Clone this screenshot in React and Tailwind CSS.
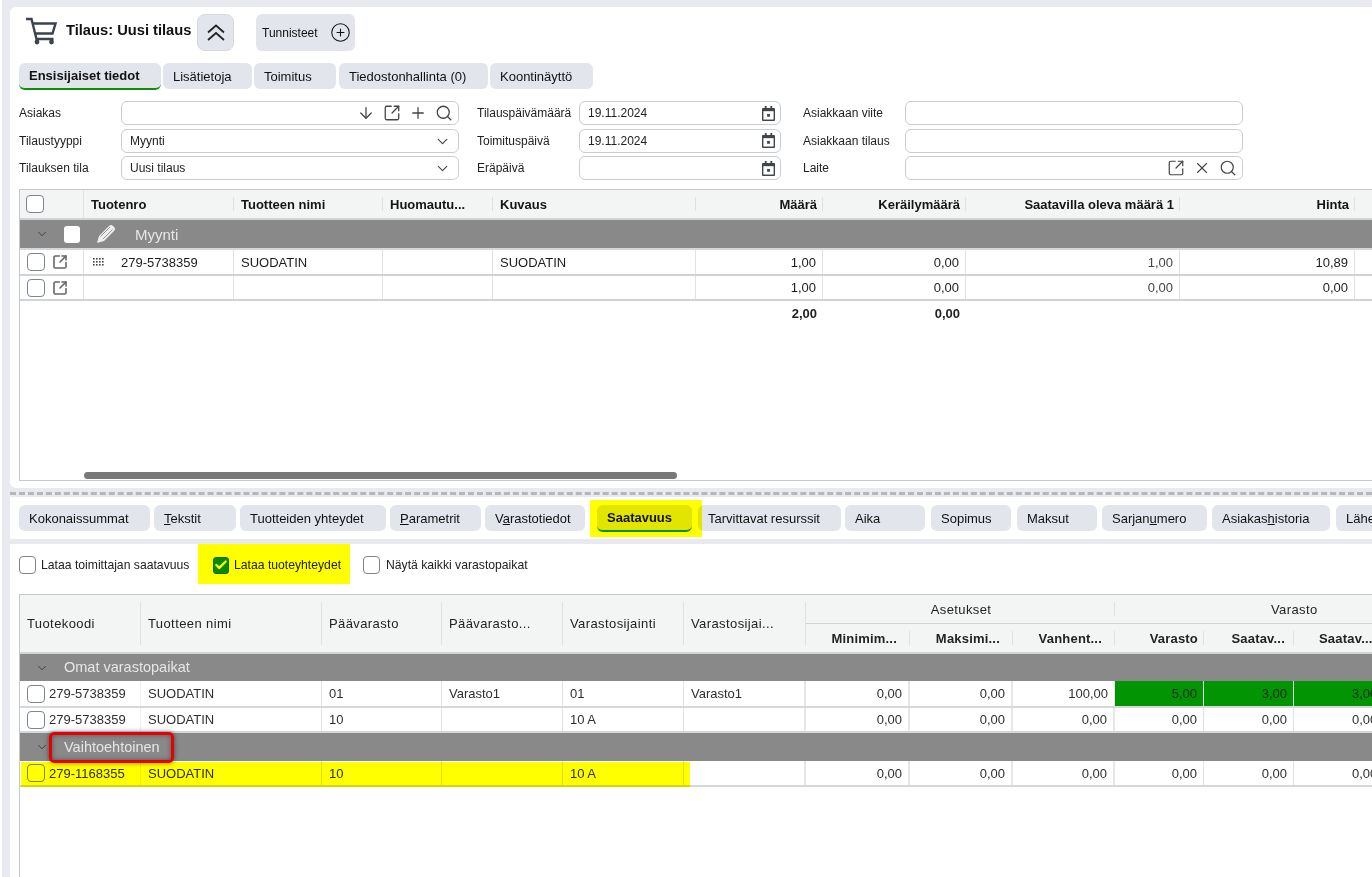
import { ArrowDown, ChevronDown, Plus, Search, SquareArrowOutUpRight, X, CirclePlus, Check } from 'lucide-react';

const TOP_COLS = 'grid grid-cols-[64px_150px_149px_110px_203px_127px_143px_214px_175px_1fr]';
const BOTTOM_COLS = 'grid grid-cols-[121px_181px_120px_121px_121px_122px_104px_103px_102px_89px_90px_84px]';

function Box({ className = '' }) {
  return <span className={`block h-4 w-4 shrink-0 rounded-[3px] border border-[#7d868c] bg-white ${className}`} />;
}

function CartIcon() {
  return (
    <svg width="31" height="28" viewBox="0 0 31 28" fill="none" stroke="#3c4250" strokeWidth="2.4">
      <path d="M0 2h5.5l5 20h17" />
      <path d="M7 6.5h22.5l-3 10H9.5" />
      <circle cx="11" cy="25" r="2.4" fill="#3c4250" stroke="none" />
      <circle cx="25.5" cy="25" r="2.4" fill="#3c4250" stroke="none" />
    </svg>
  );
}

function DoubleUpIcon() {
  return (
    <svg width="18" height="17" viewBox="0 0 18 17" fill="none" stroke="#222" strokeWidth="1.7">
      <path d="M1 8.5 9 1.5l8 7" />
      <path d="M1 16 9 9l8 7" />
    </svg>
  );
}

function PencilIcon() {
  return (
    <svg width="20" height="20" viewBox="0 0 20 20" className="shrink-0">
      <path fill="#eeeeee" d="M1 19l2-7L13 2q2-2 4 0l1 1q2 2 0 4L8 17z" />
      <path fill="none" stroke="#9a9a9a" strokeWidth="1" d="M4.5 12.5 14 3M7 15l9.5-9.5" />
    </svg>
  );
}

function CalendarIcon() {
  return (
    <svg width="13" height="15" viewBox="0 0 14 16" className="text-[#40454a]">
      <path fill="currentColor" d="M3 0h2v2h4V0h2v2h2a1 1 0 0 1 1 1v12a1 1 0 0 1-1 1H1a1 1 0 0 1-1-1V3a1 1 0 0 1 1-1h2z" />
      <rect x="1.5" y="5.5" width="11" height="9" fill="#fff" />
      <rect x="5.5" y="8.5" width="3" height="3" fill="currentColor" />
    </svg>
  );
}

function GripIcon() {
  return (
    <svg width="12" height="9" viewBox="0 0 12 9" className="text-[#444]">
      {[0, 3, 6, 9].map((x) =>
        [0, 3, 6].map((y) => <rect key={`${x}-${y}`} x={x} y={y} width="1.6" height="1.6" fill="currentColor" />)
      )}
    </svg>
  );
}

function Input({ children, value, className = '' }) {
  return (
    <div className={`flex h-6 items-center justify-between rounded-md border border-[#c9cdd2] bg-white pl-2 pr-[5px] text-[#222] ${className}`}>
      <span>{value}</span>
      <span className="flex items-center gap-[8px] text-[#444]">{children}</span>
    </div>
  );
}

function Tab({ label, active, className = '' }) {
  return (
    <div
      className={`flex shrink-0 items-center rounded-md bg-[#e2e5ec] pl-[10px] text-[13px] text-[#111] ${
        active ? 'h-[27px] border-b-2 border-[#0a8f0a] font-bold' : 'h-[26px]'
      } ${className}`}
    >
      {label}
    </div>
  );
}

function HeadCell({ children, right, noLine, className = '' }) {
  return (
    <div className={`relative flex items-center overflow-hidden whitespace-nowrap pl-[7px] pr-[6px] ${right ? 'justify-end' : ''} ${className}`}>
      {children}
      {!noLine && <span className="absolute bottom-[7px] right-0 top-[7px] w-px bg-[#dfe2e4]" />}
    </div>
  );
}

function Cell({ children, right, className = '' }) {
  return (
    <div className={`flex items-center overflow-hidden whitespace-nowrap border-r border-[#e0e3e5] pl-[7px] pr-[6px] ${right ? 'justify-end' : ''} ${className}`}>
      {children}
    </div>
  );
}

function TopRow({ code, name, qty, stock, price, className = '' }) {
  return (
    <div className={`${TOP_COLS} border-b-2 border-[#cfd3d6] text-[13px] text-[#1c1c1c] ${className}`}>
      <Cell className="gap-[7px] pl-[5px]">
        <Box className="h-[18px] w-[18px] rounded-[4px]" />
        <SquareArrowOutUpRight size={16} strokeWidth={2.4} className="text-[#666]" />
      </Cell>
      <Cell className="gap-[16px]">
        {code && <span className="flex w-[14px] items-center pl-[2px]"><GripIcon /></span>}
        {code}
      </Cell>
      <Cell>{name}</Cell>
      <Cell />
      <Cell>{name}</Cell>
      <Cell right>{qty}</Cell>
      <Cell right>0,00</Cell>
      <Cell right className="text-[#444]">{stock}</Cell>
      <Cell right>{price}</Cell>
      <Cell className="border-r-0" />
    </div>
  );
}

function BottomRow({ code, name, main, mainName, loc, locName, exp = '0,00', green, stock = ['0,00', '0,00', '0,00'], className = '' }) {
  const stockClass = green ? 'bg-[#029402] border-[#4fb04f] text-[#0b2b0b]' : '';
  return (
    <div className={`${BOTTOM_COLS} border-b-2 border-[#d5d8db] text-[13px] text-[#2f2f2f] ${className}`}>
      <Cell className="gap-[4px] pl-[6px] pr-0 border-r-[#eceef0]">
        <Box className="h-[18px] w-[18px] rounded-[4px]" />
        {code}
      </Cell>
      <Cell className="pl-[6px]">{name}</Cell>
      <Cell className="pl-[6px]">{main}</Cell>
      <Cell className="pl-[6px]">{mainName}</Cell>
      <Cell className="pl-[6px]">{loc}</Cell>
      <Cell className="border-r-2 border-[#e5e7e9] pl-[6px]">{locName}</Cell>
      <Cell right className="border-r-2 border-[#e5e7e9]">0,00</Cell>
      <Cell right className="border-r-2 border-[#e5e7e9]">0,00</Cell>
      <Cell right className={green ? '' : 'border-r-2 border-[#e5e7e9]'}>{exp}</Cell>
      <Cell right className={stockClass}>{stock[0]}</Cell>
      <Cell right className={stockClass}>{stock[1]}</Cell>
      <Cell className={`${stockClass} pl-[58px] pr-0`}>{stock[2]}</Cell>
    </div>
  );
}

function GroupBar({ label, className = '', children }) {
  return (
    <div className={`flex items-center bg-[#898989] text-[14.5px] text-[#e6e6e6] ${className}`}>
      <ChevronDown size={14} strokeWidth={1.5} className="ml-[15px] mr-[15px] shrink-0 text-[#333]" />
      {children}
      <span>{label}</span>
    </div>
  );
}

function CheckOption({ label, checked, className = '' }) {
  return (
    <label className={`flex shrink-0 items-center gap-[5px] text-[12.2px] text-[#222] ${className}`}>
      {checked ? (
        <span className="flex h-[17px] w-[16px] items-center justify-center rounded-[3px] border border-[#0a6b0a] bg-[#078a07]">
          <Check size={14} strokeWidth={4} className="text-white" />
        </span>
      ) : (
        <Box className="h-[18px] w-[17px] rounded-[4px]" />
      )}
      {label}
    </label>
  );
}

export default function App() {
  return (
    <div className="relative h-[877px] w-[1372px] overflow-hidden border-l-2 border-white bg-[#e9eaf0] pt-[7px] pl-[8px] text-[12px] leading-none [font-family:'Liberation_Sans',Arial,sans-serif]">
      <section className="h-[481px] rounded-l-md bg-white pl-[9px] pt-[7px]">
        <div className="flex h-[37px] items-center">
          <span className="mb-[4px] ml-[7px]"><CartIcon /></span>
          <h1 className="mb-[4px] ml-[9px] w-[125px] whitespace-nowrap text-[14.7px] font-bold text-[#111]">Tilaus: Uusi tilaus</h1>
          <button className="ml-[6px] flex h-[37px] w-[37px] items-center justify-center rounded-lg border border-[#d5d8e0] bg-[#e2e5ec]">
            <DoubleUpIcon />
          </button>
          <div className="ml-[22px] flex h-[37px] w-[99px] items-center gap-[12px] rounded-md bg-[#e2e5ec] pl-[6px] text-[#111]">
            Tunnisteet
            <CirclePlus size={21} strokeWidth={1.2} />
          </div>
        </div>

        <div className="mt-[12px] flex items-start">
          <Tab active label="Ensisijaiset tiedot" className="mr-[2px] w-[142px]" />
          <Tab label="Lisätietoja" className="mr-[2px] w-[89px]" />
          <Tab label="Toimitus" className="mr-[3px] w-[82px]" />
          <Tab label="Tiedostonhallinta (0)" className="mr-[2px] w-[149px]" />
          <Tab label="Koontinäyttö" className="w-[103px]" />
        </div>

        <div className="mt-[11px] grid grid-cols-[102px_338px_18px_102px_202px_22px_102px_338px] items-center gap-y-[3.5px] text-[#222]">
          <span>Asiakas</span>
          <Input>
            <ArrowDown size={18} strokeWidth={1.7} />
            <SquareArrowOutUpRight size={18} strokeWidth={1.7} />
            <Plus size={18} strokeWidth={1.7} />
            <Search size={18} strokeWidth={1.7} />
          </Input>
          <span />
          <span>Tilauspäivämäärä</span>
          <Input value="19.11.2024" className="pr-[2px]"><CalendarIcon /></Input>
          <span />
          <span>Asiakkaan viite</span>
          <Input />

          <span>Tilaustyyppi</span>
          <Input value="Myynti"><ChevronDown size={17} strokeWidth={1.6} className="mr-[2px] mt-[1px]" /></Input>
          <span />
          <span>Toimituspäivä</span>
          <Input value="19.11.2024" className="pr-[2px]"><CalendarIcon /></Input>
          <span />
          <span>Asiakkaan tilaus</span>
          <Input />

          <span>Tilauksen tila</span>
          <Input value="Uusi tilaus"><ChevronDown size={17} strokeWidth={1.6} className="mr-[2px] mt-[1px]" /></Input>
          <span />
          <span>Eräpäivä</span>
          <Input className="pr-[2px]"><CalendarIcon /></Input>
          <span />
          <span>Laite</span>
          <Input>
            <SquareArrowOutUpRight size={18} strokeWidth={1.6} />
            <X size={18} strokeWidth={1.5} />
            <Search size={18} strokeWidth={1.6} />
          </Input>
        </div>

        <div className="relative mt-[9px] h-[292px] overflow-hidden border-b border-l border-t border-[#c5c9cc]">
          <div className={`${TOP_COLS} h-[30px] border-b-2 border-[#d0d4d7] bg-[#f3f5f5] text-[13px] font-bold text-[#151515]`}>
            <div className="flex items-center border-r border-[#dfe2e4] pl-[6px]">
              <Box className="h-[18px] w-[18px] rounded-[4px]" />
            </div>
            <HeadCell>Tuotenro</HeadCell>
            <HeadCell>Tuotteen nimi</HeadCell>
            <HeadCell>Huomautu...</HeadCell>
            <HeadCell>Kuvaus</HeadCell>
            <HeadCell right>Määrä</HeadCell>
            <HeadCell right>Keräilymäärä</HeadCell>
            <HeadCell right>Saatavilla oleva määrä 1</HeadCell>
            <HeadCell right>Hinta</HeadCell>
            <HeadCell noLine />
          </div>
          <GroupBar label="Myynti" className="h-[30px] border-b-2 border-[#d5d8db] text-[15px]">
            <span className="mr-[16px] block h-[17px] w-[16px] rounded-[3px] bg-white" />
            <PencilIcon />
            <span className="w-[19px]" />
          </GroupBar>
          <TopRow code="279-5738359" name="SUODATIN" qty="1,00" stock="1,00" price="10,89" className="h-[26px]" />
          <TopRow qty="1,00" stock="0,00" price="0,00" className="h-[25px]" />
          <div className={`${TOP_COLS} h-[25px] text-[13px] font-bold text-[#222]`}>
            <span className="col-span-5" />
            <div className="flex items-center justify-end pr-[6px]">2,00</div>
            <div className="flex items-center justify-end pr-[6px]">0,00</div>
          </div>
          <div className="absolute bottom-[1px] left-[64px] h-[7px] w-[593px] rounded-full bg-[#787878]" />
        </div>
      </section>

      <div className="mt-[4px] border-t-[3px] border-dashed border-[#b4b6ba]" />

      <nav className="mt-[2px] flex h-[42px] items-start overflow-hidden bg-white pl-[9px] pt-[8px]">
        <Tab label="Kokonaissummat" className="mr-[4px] w-[131px]" />
        <Tab label={<span><u>T</u>ekstit</span>} className="mr-[4px] w-[82px]" />
        <Tab label="Tuotteiden yhteydet" className="mr-[4px] w-[146px]" />
        <Tab label={<span><u>P</u>arametrit</span>} className="mr-[4px] w-[91px]" />
        <Tab label={<span>V<u>a</u>rastotiedot</span>} className="mr-[12px] w-[100px]" />
        <Tab active label="Saatavuus" className="mr-[6px] w-[95px]" />
        <Tab label="Tarvittavat resurssit" className="mr-[4px] w-[143px]" />
        <Tab label="Aika" className="mr-[6px] w-[80px]" />
        <Tab label="Sopimus" className="mr-[6px] w-[80px]" />
        <Tab label="Maksut" className="mr-[5px] w-[80px]" />
        <Tab label={<span>Sarjan<u>u</u>mero</span>} className="mr-[5px] w-[105px]" />
        <Tab label={<span>Asiakas<u>h</u>istoria</span>} className="mr-[6px] w-[118px]" />
        <Tab label="Lähetykset" className="w-[80px]" />
      </nav>

      <section className="mt-[5px] h-[333px] bg-white pl-[9px]">
        <div className="flex h-[42px] items-center">
          <CheckOption label="Lataa toimittajan saatavuus" className="w-[194px]" />
          <CheckOption checked label="Lataa tuoteyhteydet" className="w-[150px] gap-[4px]" />
          <CheckOption label="Näytä kaikki varastopaikat" className="gap-[6px]" />
        </div>

        <div className="mt-[8px] h-[290px] overflow-hidden border-l border-t border-[#c5c9cc]">
          <div className={`${BOTTOM_COLS} h-[59px] grid-rows-[29px_28px] border-b-2 border-[#d0d4d7] bg-[#f3f5f5] text-[13px] tracking-[0.4px] text-[#222]`}>
            <HeadCell className="row-span-2 pl-[6px]">Tuotekoodi</HeadCell>
            <HeadCell className="row-span-2 pl-[6px]">Tuotteen nimi</HeadCell>
            <HeadCell className="row-span-2 pl-[6px]">Päävarasto</HeadCell>
            <HeadCell className="row-span-2 pl-[6px]">Päävarasto...</HeadCell>
            <HeadCell className="row-span-2 pl-[6px]">Varastosijainti</HeadCell>
            <HeadCell className="row-span-2 pl-[6px]">Varastosijai...</HeadCell>
            <HeadCell className="col-span-3 justify-center border-b border-[#d0d4d7]">Asetukset</HeadCell>
            <HeadCell noLine className="col-span-3 justify-start border-b border-[#d0d4d7] pl-[156px]">Varasto</HeadCell>
            <HeadCell right className="pr-[13px] font-bold tracking-[0.2px]">Minimim...</HeadCell>
            <HeadCell right className="pr-[13px] font-bold tracking-[0.2px]">Maksimi...</HeadCell>
            <HeadCell right className="pr-[13px] font-bold tracking-[0.2px]">Vanhent...</HeadCell>
            <HeadCell right className="font-bold tracking-[0.2px]">Varasto</HeadCell>
            <HeadCell right className="pr-[9px] font-bold tracking-[0.2px]">Saatav...</HeadCell>
            <HeadCell noLine className="pl-[25px] font-bold tracking-[0.2px]">Saatav...</HeadCell>
          </div>
          <GroupBar label="Omat varastopaikat" className="h-[27px]" />
          <BottomRow code="279-5738359" name="SUODATIN" main="01" mainName="Varasto1" loc="01" locName="Varasto1" exp="100,00" green stock={['5,00', '3,00', '3,00']} className="h-[27px]" />
          <BottomRow code="279-5738359" name="SUODATIN" main="10" loc="10 A" className="h-[25px]" />
          <GroupBar label="Vaihtoehtoinen" className="h-[28px]" />
          <BottomRow code="279-1168355" name="SUODATIN" main="10" loc="10 A" className="h-[26px]" />
        </div>
      </section>

      {/* marker highlights drawn over the screenshot */}
      <div className="absolute left-[588px] top-[500px] h-[37px] w-[112px] bg-[#ffff00] mix-blend-multiply" />
      <div className="absolute left-[196px] top-[544px] h-[40px] w-[152px] bg-[#ffff00] mix-blend-multiply" />
      <div className="absolute left-[19px] top-[762px] h-[25px] w-[669px] bg-[#ffff00] mix-blend-multiply" />
      <div className="absolute left-[47px] top-[732px] h-[31px] w-[125px] rounded-[5px] border-[3px] border-[#e60000] shadow-[0_0_5px_rgba(0,0,0,0.5),inset_0_0_5px_rgba(0,0,0,0.4)]" />
    </div>
  );
}
